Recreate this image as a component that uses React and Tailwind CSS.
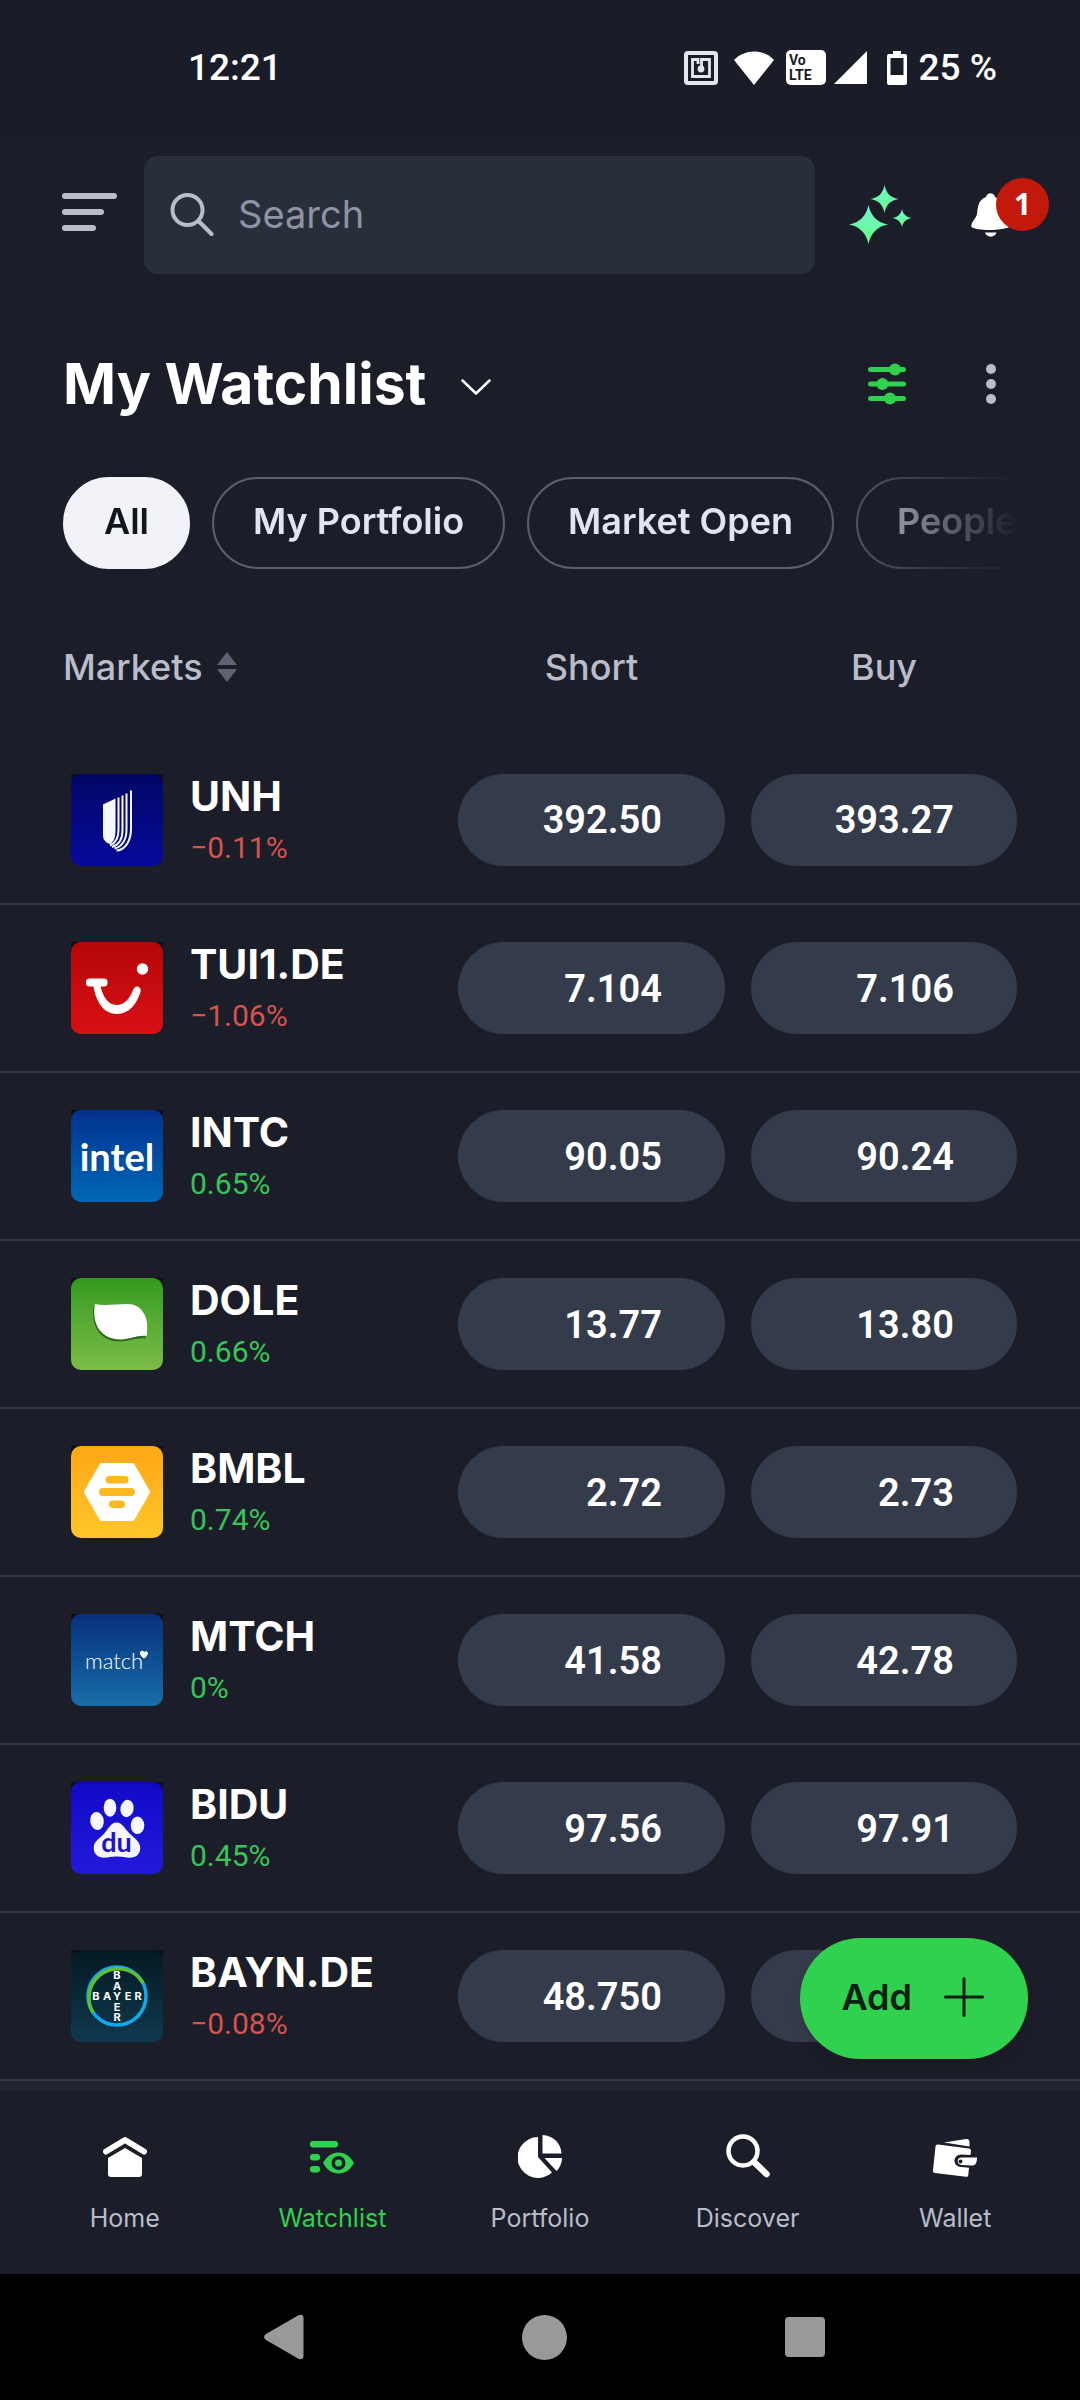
import { useState } from 'react';

const ROWS = [
  { symbol: 'UNH', change: '−0.11%', short: '392.50', buy: '393.27', bg: 'from-[#020666] to-[#050a9c]', Logo: UnhLogo },
  { symbol: 'TUI1.DE', change: '−1.06%', short: '7.104', buy: '7.106', bg: 'from-[#b50707] to-[#d81015]', Logo: TuiLogo },
  { symbol: 'INTC', change: '0.65%', short: '90.05', buy: '90.24', bg: 'from-[#04308f] to-[#0268b5]', Logo: IntelLogo },
  { symbol: 'DOLE', change: '0.66%', short: '13.77', buy: '13.80', bg: 'from-[#2f9a1d] to-[#7cbd48]', Logo: DoleLogo },
  { symbol: 'BMBL', change: '0.74%', short: '2.72', buy: '2.73', bg: 'from-[#ffa716] to-[#ffc629]', Logo: BumbleLogo },
  { symbol: 'MTCH', change: '0%', short: '41.58', buy: '42.78', bg: 'from-[#0a2f7c] to-[#1a6ea8]', Logo: MatchLogo },
  { symbol: 'BIDU', change: '0.45%', short: '97.56', buy: '97.91', bg: 'from-[#0f09c6] to-[#2319dc]', Logo: BaiduLogo },
  { symbol: 'BAYN.DE', change: '−0.08%', short: '48.750', buy: '', bg: 'from-[#041a22] to-[#10394f]', Logo: BayerLogo },
];

const FILTERS = ['All', 'My Portfolio', 'Market Open', 'People'];

const TABS = [
  { name: 'Home', Icon: HomeIcon },
  { name: 'Watchlist', Icon: WatchlistIcon },
  { name: 'Portfolio', Icon: PortfolioIcon },
  { name: 'Discover', Icon: DiscoverIcon },
  { name: 'Wallet', Icon: WalletIcon },
];

/* Company logos, all on a 92x92 tile */
function UnhLogo() {
  return (
    <svg viewBox="0 0 92 92" className="size-full">
      <path d="M32 30.500 44.500 24.500V56c0 8-2 12-5.500 14C34.500 68.500 32 66 32 61Z" fill="#f6f7fc" />
      <g fill="none" stroke="#f6f7fc">
        <path d="M47.500 23.500V56c0 8-3 13-8.500 15.500" strokeWidth="2" />
        <path d="M51.500 21.500V56c0 9-4 15-10.500 17" strokeWidth="2" />
        <path d="M55.500 19.500V56c0 10-5 17-12 18.500" strokeWidth="2" />
        <path d="M60 16.500V55c0 13-7 21.500-14.500 21.500" strokeWidth="2" />
      </g>
    </svg>
  );
}

function TuiLogo() {
  return (
    <svg viewBox="0 0 92 92" className="size-full" fill="#fff">
      <circle cx="71.500" cy="27" r="5.700" />
      <rect x="15" y="36.500" width="21.500" height="8" rx="3.500" />
      <path d="M22 41c2 17 10 31 23.500 31S66 61 69.500 50c1.500-5-4.500-8-7-3C59 56 54 63 45.500 63S31 54 29 41Z" />
    </svg>
  );
}

function IntelLogo() {
  return (
    <svg viewBox="0 0 92 92" className="size-full">
      <text x="46" y="61" textAnchor="middle" fill="#fff" className="font-['Lato',sans-serif] text-[38px] font-bold">intel</text>
    </svg>
  );
}

function DoleLogo() {
  return (
    <svg viewBox="0 0 92 92" className="size-full">
      <path d="M22.500 28.500c10 1 20 0 32 0 14 0 21 10 20 32-10-1-16 3-26 3C31 63.500 19.500 50 22.500 28.500Z" fill="#2c6b1c" />
      <path d="M24 26c10 2 20 0 32 0 15 0 23 13 19.500 32-10-1-16 3.500-26 3.500C31 61.500 20 47 24 26Z" fill="#fff" />
    </svg>
  );
}

function BumbleLogo() {
  return (
    <svg viewBox="0 0 92 92" className="size-full">
      <path d="M30.500 19h31L77 46 61.500 73h-31L15 46Z" fill="#fff" stroke="#fff" strokeWidth="4" strokeLinejoin="round" />
      <g fill="#ffb71f">
        <rect x="34.500" y="30" width="23" height="7.500" rx="3.700" />
        <rect x="28" y="42" width="36" height="8" rx="4" />
        <rect x="38" y="54.500" width="16" height="7.500" rx="3.700" />
      </g>
    </svg>
  );
}

function MatchLogo() {
  return (
    <svg viewBox="0 0 92 92" className="size-full" fill="#fff">
      <text x="14" y="55" className="font-['Lato',sans-serif] text-[22px] font-light">match</text>
      <path d="M73 44.500c-3-2-5-5-3.500-7 1.300-1.200 3-.700 3.700.600 1-1.300 3-1 3.600.600.600 2.200-2 4.500-3.800 5.800Z" />
    </svg>
  );
}

function BaiduLogo() {
  return (
    <svg viewBox="0 0 92 92" className="size-full" fill="#f6f6fe">
      <ellipse cx="39" cy="25.700" rx="6.300" ry="9" />
      <ellipse cx="56" cy="26.500" rx="6.600" ry="8.700" transform="rotate(10 56 26.500)" />
      <ellipse cx="26" cy="39" rx="6.800" ry="9" transform="rotate(-8 26 39)" />
      <ellipse cx="66.500" cy="43.300" rx="6.800" ry="8.700" />
      <path d="M45.500 40.500c6 0 8 6 13 11s11 8 10.700 15c-.300 7-6 10-13 9-7-1.400-14-1.400-20.500 0-8 1-13-3-13-9.500 0-7 6-9.500 10.500-14.500s6.500-11 12.300-11Z" />
      <text x="45.500" y="70" textAnchor="middle" fill="#1b12d0" className="font-['Lato',sans-serif] text-[27px] font-bold">du</text>
    </svg>
  );
}

function BayerLogo() {
  const steps = [25, 36, 46, 57, 67];
  return (
    <svg viewBox="0 0 92 92" className="size-full font-['Inter',sans-serif] text-[11px] font-bold">
      <circle cx="46" cy="46" r="29" fill="none" stroke="#10a9ec" strokeWidth="3.500" />
      <path d="M22 62.500A29 29 0 0 1 72 33" fill="none" stroke="#5fbf2a" strokeWidth="3.500" />
      <g fill="#fff" textAnchor="middle">
        {'BAYER'.split('').map((c, i) => <text key={c} x={steps[i]} y="50">{c}</text>)}
        {'BAYER'.split('').map((c, i) => c !== 'Y' && <text key={c} x="46" y={steps[i] + 4}>{c}</text>)}
      </g>
    </svg>
  );
}

/* Bottom tab icons */
function HomeIcon() {
  return (
    <svg viewBox="0 0 44 44" className="size-11">
      <path d="M3 17.500 22 6l19 11.500" fill="none" stroke="currentColor" strokeWidth="6" strokeLinecap="round" strokeLinejoin="round" />
      <path d="M22 14 39 24v16a3 3 0 0 1-3 3H8a3 3 0 0 1-3-3V24Z" fill="currentColor" />
    </svg>
  );
}

function WatchlistIcon() {
  return (
    <svg viewBox="0 0 44 44" className="size-11" fill="currentColor">
      <rect y="7" width="28" height="6.500" rx="3" />
      <rect y="20" width="10" height="6.500" rx="3" />
      <rect y="32" width="10" height="6.500" rx="3" />
      <path fillRule="evenodd" d="M13 29c4-7 9-10.500 15.500-10.500S40 22 44 29c-4 7-9 10.500-15.500 10.500S17 36 13 29Zm15.500-7a7 7 0 1 0 0 14 7 7 0 0 0 0-14Z" />
      <circle cx="28.500" cy="29" r="3.500" />
    </svg>
  );
}

function PortfolioIcon() {
  return (
    <svg viewBox="0 0 44 44" className="size-11" fill="currentColor">
      <path d="M20 3v20l14 15.500A20.500 20.500 0 1 1 20 3Z" />
      <path d="M24.500 1C35 1.500 43 9 43.500 19.500h-19Z" />
      <path d="M26.500 24H44c0 5-2 9.500-5.500 13Z" />
    </svg>
  );
}

function DiscoverIcon() {
  return (
    <svg viewBox="0 0 44 44" className="size-11" fill="none" stroke="currentColor" strokeLinecap="round">
      <circle cx="17" cy="17" r="14.500" strokeWidth="4.500" />
      <path d="m28 28 12.500 12" strokeWidth="6.500" />
    </svg>
  );
}

function WalletIcon() {
  return (
    <svg viewBox="0 0 44 44" className="size-11" fill="currentColor">
      <path d="m11 8.500 22-3.500c2-.300 3.500 1 3.500 3v4.500Z" />
      <path d="M5 10.500 36 14.500c1.500.200 2 1 2 2.500l-.500 4-9-.500c-9 0-9.500 11.500-.500 12.500l8 .700-.700 7.300c-.200 1.500-1 2-2.500 1.800L2 39c-1.500-.200-2-1-2-2.500l2.500-24c.200-1.500 1-2.200 2.500-2Z" />
      <path fillRule="evenodd" d="M28 23.500h16c0 5.500-1.500 8-5 8l-10.500-.500c-5-.500-5-7 -.500-7.500Zm-.500 2a2 2 0 1 0 0 4 2 2 0 0 0 0-4Z" />
    </svg>
  );
}

function StatusBar() {
  return (
    <div className="flex h-[135px] items-center justify-between bg-[#1a1c27] pr-[83px] pl-[188px] font-['Roboto',sans-serif] text-[37px] font-medium">
      <span>12:21</span>
      <div className="flex items-center gap-3">
        <svg viewBox="0 0 34 34" className="size-[34px]">
          <rect width="34" height="34" rx="4" fill="#e4e6ee" />
          <rect x="4" y="4" width="26" height="26" fill="#1a1c27" />
          <path d="M14 13V8.500H8.500v17h17v-17h-8V18" fill="none" stroke="#e4e6ee" strokeWidth="2.800" />
          <circle cx="17" cy="18" r="3.400" fill="#e4e6ee" />
        </svg>
        <svg viewBox="0 0 40 34" className="ml-1 h-[34px] w-10">
          <path d="M0 9C11-2.500 29-2.500 40 9L20 34Z" fill="#fff" />
        </svg>
        <svg viewBox="0 0 40 35" className="h-[35px] w-10">
          <rect width="40" height="35" rx="5" fill="#fff" />
          <g fill="#1a1c27" className="text-[14px] font-bold">
            <text x="3" y="15">Vo</text>
            <text x="3" y="30">LTE</text>
          </g>
        </svg>
        <svg viewBox="0 0 33 33" className="-ml-1 size-[33px]">
          <path d="M33 0v33H0Z" fill="#fff" />
        </svg>
        <svg viewBox="0 0 20 34" className="ml-2 h-[34px] w-5">
          <path fillRule="evenodd" d="M6 0h8v3h4a2 2 0 0 1 2 2v27a2 2 0 0 1-2 2H2a2 2 0 0 1-2-2V5a2 2 0 0 1 2-2h4ZM3.500 7v17h13V7Z" fill="#fff" />
        </svg>
        <span>25 %</span>
      </div>
    </div>
  );
}

function Header() {
  return (
    <header className="flex items-center pt-[21px] pr-[69px] pl-[62px]">
      <button aria-label="Menu" className="mr-[27px]">
        <svg viewBox="0 0 55 46" className="h-[46px] w-[55px]" fill="#b9bccb">
          <rect y="1" width="55" height="6" rx="3" />
          <rect y="17" width="42" height="6" rx="3" />
          <rect y="33" width="34" height="6" rx="3" />
        </svg>
      </button>
      <label className="flex h-[118px] min-w-0 flex-1 items-center rounded-[14px] bg-[#282e3a] pl-[26px]">
        <svg viewBox="0 0 44 44" className="size-11 shrink-0" fill="none" stroke="#b9bccb" strokeWidth="4" strokeLinecap="round">
          <circle cx="17.500" cy="17" r="15" />
          <path d="m28.500 28 13 13" />
        </svg>
        <input
          type="text"
          aria-label="Search"
          placeholder="Search"
          className="ml-6 w-full bg-transparent pb-0.5 text-[38px] text-white outline-none placeholder:text-[#8f94a5]"
        />
      </label>
      <button aria-label="Assistant" className="ml-[34px]">
        <svg viewBox="0 0 64 60" className="h-[60px] w-16" fill="url(#spark)">
          <defs>
            <linearGradient id="spark" x1="0" y1="0" x2="0" y2="1">
              <stop offset="0" stopColor="#74f3d2" />
              <stop offset="1" stopColor="#63ff84" />
            </linearGradient>
          </defs>
          <path d="M35.500 0C37 8 41 12.500 49.500 14 41 15.500 37 20 35.500 28 34 20 30 15.500 21.500 14 30 12.500 34 8 35.500 0Z" />
          <path d="M19.500 20C22 31 28 37.500 39 39.500 28 41.500 22 48 19.500 59 17 48 11 41.500 0 39.500 11 37.500 17 31 19.500 20Z" />
          <path d="M53 24C54 29 57 32 62.500 33 57 34 54 37 53 42 52 37 49 34 43.500 33 49 32 52 29 53 24Z" />
        </svg>
      </button>
      <button aria-label="Notifications" className="relative ml-[58px]">
        <svg viewBox="0 0 40 46" className="h-[46px] w-10" fill="#fff">
          <path d="M15 5c1-5 8-5 9 0 8 3 8 10 9 17 .700 5 6.500 8 6.500 12.500-6 4-33 5-39 .500C-.500 30 5 27 6 22 7 15 7 8 15 5Z" />
          <path d="M14 40.500h11.500c-1 5.500-10.500 5.500-11.500 0Z" />
        </svg>
        <span className="absolute -top-3.5 left-[25px] flex size-[53px] items-center justify-center rounded-full bg-[#c2190c] pb-0.5 font-['Open_Sans',sans-serif] text-[30px] font-bold">
          1
        </span>
      </button>
    </header>
  );
}

export default function App() {
  const [filter, setFilter] = useState('All');
  const [tab, setTab] = useState('Watchlist');

  return (
    <div className="flex min-h-screen flex-col bg-[#1b1e28] font-['Inter',sans-serif] text-white">
      <StatusBar />
      <Header />

      {/* Watchlist title */}
      <div className="flex h-[203px] items-center pt-4 pr-[84px] pl-[63px]">
        <button className="flex items-center gap-[34px]">
          <h1 className="text-[57px] leading-none font-bold">My Watchlist</h1>
          <svg viewBox="0 0 30 16" className="mt-1.5 h-4 w-[30px]" fill="none" stroke="#fff" strokeWidth="2.500" strokeLinecap="round" strokeLinejoin="round">
            <path d="m1.500 1.500 13.500 13 13.500-13" />
          </svg>
        </button>
        <button aria-label="Filters" className="ml-auto">
          <svg viewBox="0 0 38 42" className="h-[42px] w-[38px]" fill="#30d14e">
            <rect y="4" width="38" height="5" rx="2.500" />
            <rect y="18.500" width="38" height="5" rx="2.500" />
            <rect y="33" width="38" height="5" rx="2.500" />
            <circle cx="27" cy="6.500" r="6" />
            <circle cx="14.500" cy="21" r="6" />
            <circle cx="22" cy="35.500" r="6" />
          </svg>
        </button>
        <button aria-label="More" className="ml-20">
          <svg viewBox="0 0 10 40" className="h-10 w-2.5" fill="#b9bccb">
            <circle cx="5" cy="5" r="5" />
            <circle cx="5" cy="20" r="5" />
            <circle cx="5" cy="35" r="5" />
          </svg>
        </button>
      </div>

      {/* Filter chips */}
      <div className="mr-[63px] ml-[63px] flex gap-[22px] overflow-hidden [mask-image:linear-gradient(to_right,black_79%,transparent)]">
        {FILTERS.map((name) => (
          <button
            key={name}
            onClick={() => setFilter(name)}
            className={`h-[92px] shrink-0 rounded-full border-2 px-[39px] pb-1 text-[36px] font-semibold ${
              filter === name ? 'border-[#f2f3f8] bg-[#f2f3f8] text-[#14161d]' : 'border-[#5a5f6e] text-[#e2e4ef]'
            }`}
          >
            {name}
          </button>
        ))}
      </div>

      <main className="relative mt-7">
        <table className="w-full table-fixed border-collapse">
          <thead>
            <tr className="h-[139px] text-[36px] text-[#b9bccb]">
              <th scope="col" className="pl-[63px] text-left font-medium">
                <button className="flex items-center gap-3.5">
                  Markets
                  <svg viewBox="0 0 20 30" className="h-[30px] w-5" fill="#5d6373">
                    <path d="M10 0 20 13H0ZM0 17h20L10 30Z" />
                  </svg>
                </button>
              </th>
              <th scope="col" className="w-[293px] pr-[26px] font-medium">Short</th>
              <th scope="col" className="w-[329px] pr-[63px] font-medium">Buy</th>
            </tr>
          </thead>
          <tbody>
            {ROWS.map(({ symbol, change, short, buy, bg, Logo }) => (
              <tr key={symbol} className="h-[168px] border-b-2 border-[#343947]">
                <td className="pl-[71px]">
                  <div className="flex items-center gap-[27px]">
                    <div className="size-[92px] shrink-0 bg-linear-to-b from-[#0b0d12] to-transparent to-20%">
                      <div className={`size-full overflow-hidden rounded-[10px] bg-linear-to-b ${bg}`}>
                        <Logo />
                      </div>
                    </div>
                    <div className="pt-1">
                      <div className="text-[41px] leading-[52px] font-bold">{symbol}</div>
                      <div className={`font-['Roboto',sans-serif] text-[30px] leading-[52px] ${change.startsWith('−') ? 'text-[#d4544f]' : 'text-[#38c458]'}`}>
                        {change}
                      </div>
                    </div>
                  </div>
                </td>
                <td className="pr-[26px]">
                  <button className="block h-[92px] w-full rounded-full bg-[#343b4b] pt-0.5 pr-[63px] text-right font-['Roboto',sans-serif] text-[38px] font-semibold">
                    {short}
                  </button>
                </td>
                <td className="pr-[63px]">
                  <button aria-label={`Buy ${symbol}`} className="block h-[92px] w-full rounded-full bg-[#343b4b] pt-0.5 pr-[63px] text-right font-['Roboto',sans-serif] text-[38px] font-semibold">
                    {buy}
                  </button>
                </td>
              </tr>
            ))}
          </tbody>
        </table>
        <div className="h-2.5 bg-[#21252f]"></div>

        <button className="absolute right-[52px] bottom-8 flex h-[121px] items-center gap-8 rounded-full bg-[#30d14e] pr-11 pb-1 pl-[41px] text-[36px] font-semibold text-[#0b1f12] shadow-lg">
          Add
          <svg viewBox="0 0 40 40" className="size-10" fill="none" stroke="currentColor" strokeWidth="3" strokeLinecap="round">
            <path d="M20 1.500v37M1.500 20h37" />
          </svg>
        </button>
      </main>

      {/* Tab bar */}
      <nav className="mt-auto grid h-[183px] grid-cols-5 px-[21px] pt-[43px]">
        {TABS.map(({ name, Icon }) => (
          <button key={name} onClick={() => setTab(name)} className={`flex flex-col items-center gap-6 ${tab === name ? 'text-[#30d14e]' : 'text-white'}`}>
            <Icon />
            <span className={`text-[25px] leading-8 ${tab === name ? '' : 'text-[#b9bccb]'}`}>{name}</span>
          </button>
        ))}
      </nav>

      {/* System navigation */}
      <div className="flex h-[126px] items-center justify-between bg-black pr-[255px] pl-[264px]">
        <button aria-label="Back">
          <svg viewBox="0 0 40 46" className="h-[46px] w-10" fill="#999">
            <path d="M2 20 34 1.500C37 0 39.500 1 39.500 4v38c0 3-2.500 4-5.500 2.500L2 26c-2.500-1.500-2.500-4.500 0-6Z" />
          </svg>
        </button>
        <button aria-label="Home screen" className="size-[45px] rounded-full bg-[#999]"></button>
        <button aria-label="Recent apps" className="size-10 rounded-sm bg-[#999]"></button>
      </div>
    </div>
  );
}
